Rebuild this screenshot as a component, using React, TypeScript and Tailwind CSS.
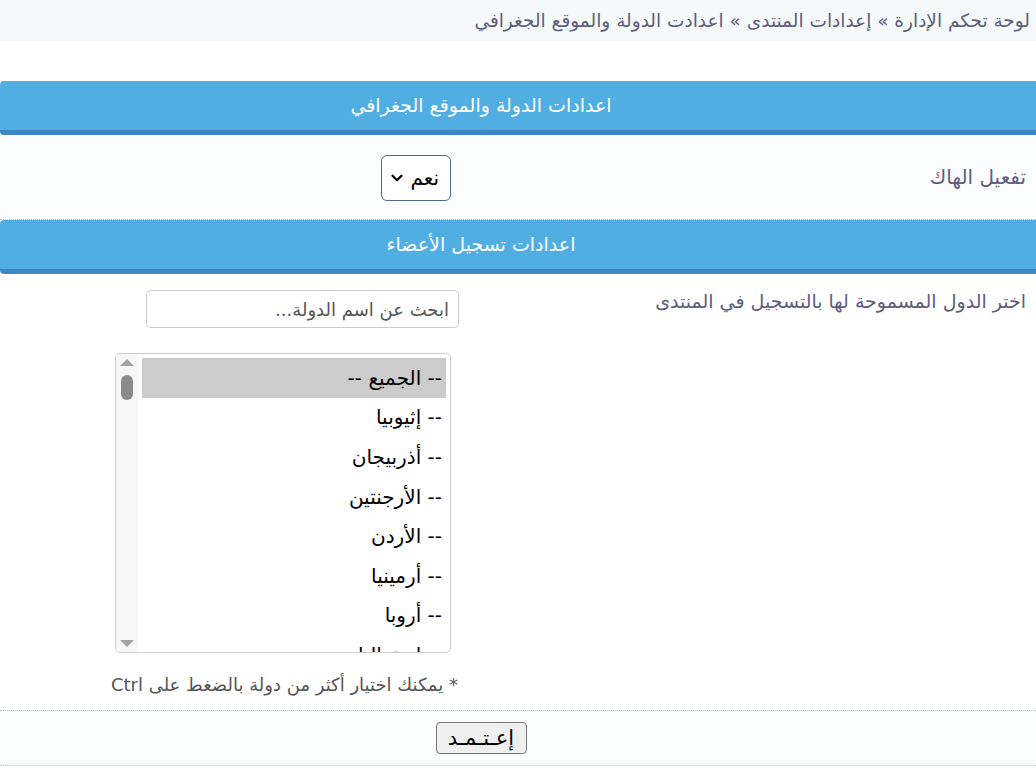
import { ChevronDown } from 'lucide-react';

const countries = [
  '-- الجميع --',
  '-- إثيوبيا',
  '-- أذربيجان',
  '-- الأرجنتين',
  '-- الأردن',
  '-- أرمينيا',
  '-- أروبا',
  '-- استراليا',
];

function SectionHeader({ title }: { title: string }) {
  return (
    <div className="h-[54px] bg-[#50aee3] border-b-[5px] border-[#3f86c6] rounded-l-[4px] flex items-center justify-center pr-[74px] text-white text-[19px]">
      {title}
    </div>
  );
}

export default function App() {
  return (
    <div
      dir="rtl"
      className="w-[1036px] min-h-[766px] bg-white text-[#5d5d7e]"
      style={{ fontFamily: '"DejaVu Sans", "Noto Sans", sans-serif' }}
    >
      <div className="h-[41px] bg-[#f5f9fa] flex items-center pr-[6px] text-[18.5px]">
        لوحة تحكم الإدارة » إعدادات المنتدى » اعدادت الدولة والموقع الجغرافي
      </div>

      <div className="h-[40px]" />

      <SectionHeader title="اعدادات الدولة والموقع الجغرافي" />

      <div className="h-[85px] bg-[#fbfdff] border-b border-dotted border-[#bbbbbb] flex">
        <div className="w-[566px] pr-[10px] pt-[28px] text-[20px] leading-[28px]">تفعيل الهاك</div>
        <div className="flex-1 pr-[19px] pt-[20px]">
          <div className="w-[70px] h-[46px] border border-[#4d6a8a] rounded-[6px] bg-white flex items-center justify-between pr-[11px] pl-[6px] text-black text-[20px]">
            <span>نعم</span>
            <ChevronDown size={18} strokeWidth={3} />
          </div>
        </div>
      </div>

      <SectionHeader title="اعدادات تسجيل الأعضاء" />

      <div className="h-[437px] bg-white border-b border-dotted border-[#bbbbbb] flex">
        <div className="w-[566px] pr-[10px] pt-[13px] text-[19px] leading-[28px]">
          اختر الدول المسموحة لها بالتسجيل في المنتدى
        </div>
        <div className="flex-1 pr-[11px] pt-[16px]">
          <div className="w-[313px] h-[38px] border border-[#cccccc] rounded-[5px] flex items-center pr-[9px] text-[18px] text-[#555555]">
            ابحث عن اسم الدولة...
          </div>

          <div className="mt-[25px] mr-[8px] w-[336px] h-[300px] border border-[#cccccc] rounded-[5px] flex overflow-hidden">
            <div className="flex-1 pt-[4px] pr-[4px] pl-[4px] overflow-hidden">
              {countries.map((c, i) => (
                <div
                  key={c}
                  className={`h-[39.6px] flex items-center pr-[4px] text-[20px] text-black ${
                    i === 0 ? 'bg-[#cccccc]' : ''
                  }`}
                >
                  {c}
                </div>
              ))}
            </div>
            <div className="w-[22px] bg-[#f7f7f7] flex flex-col items-center justify-between py-[5px]">
              <div className="flex flex-col items-center gap-[9px]">
                <div className="w-0 h-0 border-l-[7px] border-r-[7px] border-b-[7px] border-l-transparent border-r-transparent border-b-[#a3a3a3]" />
                <div className="w-[12px] h-[25px] rounded-[6px] bg-[#8a8a8a]" />
              </div>
              <div className="w-0 h-0 border-l-[7px] border-r-[7px] border-t-[7px] border-l-transparent border-r-transparent border-t-[#a3a3a3]" />
            </div>
          </div>

          <div className="mt-[18px] pr-[1px] text-[18px] text-[#555555]">
            * يمكنك اختيار أكثر من دولة بالضغط على Ctrl
          </div>
        </div>
      </div>

      <div className="h-[55px] bg-[#fbfdff] border-b border-dotted border-[#bbbbbb] flex items-center justify-center pr-[74px]">
        <button className="w-[91px] h-[32px] border border-[#767676] rounded-[4px] bg-[#efefef] text-black text-[21px] leading-none">
          إعـتـمـد
        </button>
      </div>
    </div>
  );
}
